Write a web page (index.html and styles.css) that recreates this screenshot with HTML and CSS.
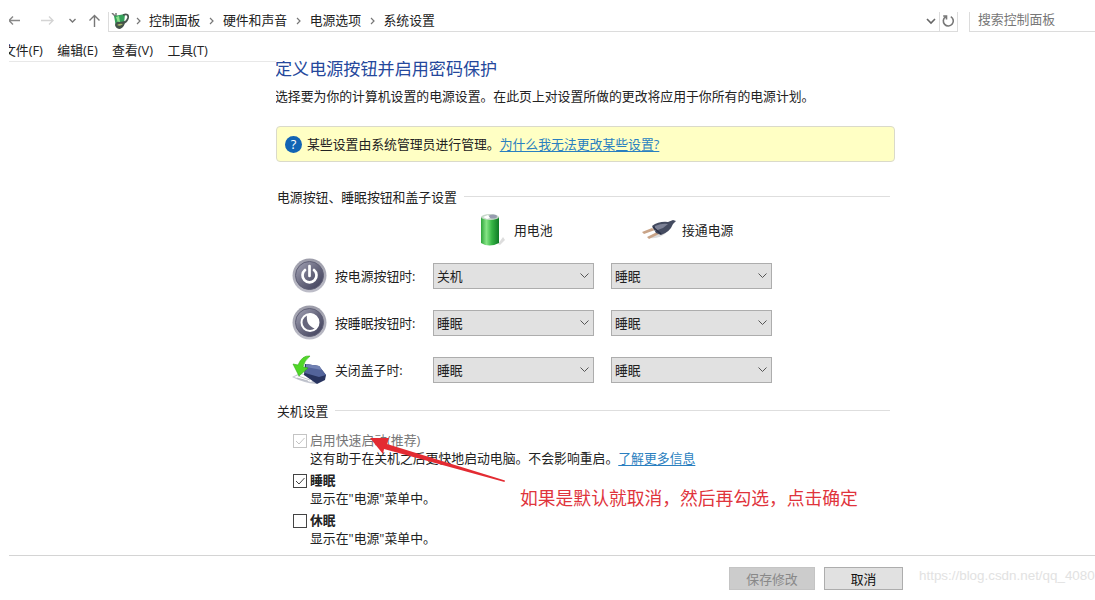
FILE: index.html
```html
<!DOCTYPE html>
<html lang="zh-CN">
<head>
  <meta charset="UTF-8" />
  <meta name="viewport" content="width=device-width, initial-scale=1.0" />
  <title>系统设置</title>
  <link rel="stylesheet" href="styles.css">
</head>
<body>
  <div class="window">
    <header class="address-bar">
      <nav class="nav-icons">
        <svg width="92" height="19" viewBox="0 0 92 19" fill="none" stroke-width="1.4">
          <path d="M0 8.500H11M4 4.500L0 8.500l4 4" stroke="#888" />
          <path d="M32 8.500h12M40 4.500l4 4-4 4" stroke="#d4d4d4" />
          <path d="M60.500 7l3 3 3-3" stroke="#777" />
          <path d="M85.500 15V3.500M80.500 8.500l5-5 5 5" stroke="#777" />
        </svg>
      </nav>
      <div class="path">
        <svg class="path-icon" width="18" height="17" viewBox="0 0 18 17">
          <path d="M1 0l4 4M5 0v4" stroke="#777" stroke-width="1.500" />
          <path d="M3 3l11-2-1 10q-3 4-8 3z" fill="#35a15a" />
          <path d="M5 4l3-1 1 6-2 1z" fill="#8be08b" />
          <path d="M12 2q6-2 5 3-1 4-5 5" fill="none" stroke="#4a5550" stroke-width="1.800" />
          <path d="M4 12q1-4 5-3l5-1q0 6-5 8-4 0-5-4z" fill="#44534a" />
          <path d="M6 12q3-2 6-1-3 3-6 1z" fill="#a9b86b" />
        </svg>
        <svg class="sep" viewBox="0 0 5 8"><path d="M1 1l3 3-3 3" /></svg>
        <span>控制面板</span>
        <svg class="sep" viewBox="0 0 5 8"><path d="M1 1l3 3-3 3" /></svg>
        <span>硬件和声音</span>
        <svg class="sep" viewBox="0 0 5 8"><path d="M1 1l3 3-3 3" /></svg>
        <span>电源选项</span>
        <svg class="sep" viewBox="0 0 5 8"><path d="M1 1l3 3-3 3" /></svg>
        <span>系统设置</span>
        <svg class="history" width="10" height="7" viewBox="0 0 10 7"><path d="M1 1l4 4 4-4" fill="none" stroke="#666" stroke-width="1.600" /></svg>
        <div class="refresh">
          <svg width="13" height="14" viewBox="0 0 13 14"><path d="M8.800 2.600A5 5 0 1 1 3.500 2.800M1.200 2h3.300v3.500" fill="none" stroke="#777" stroke-width="1.600" /></svg>
        </div>
      </div>
      <div class="search">搜索控制面板</div>
    </header>

    <nav class="menu">
      <span>文件(F)</span>
      <span>编辑(E)</span>
      <span>查看(V)</span>
      <span>工具(T)</span>
    </nav>

    <main class="content">
      <h1>定义电源按钮并启用密码保护</h1>
      <p class="intro">选择要为你的计算机设置的电源设置。在此页上对设置所做的更改将应用于你所有的电源计划。</p>

      <div class="notice">
        <span class="help">?</span>
        <span>某些设置由系统管理员进行管理。</span>
        <a href="#">为什么我无法更改某些设置?</a>
      </div>

      <h2 class="buttons-title">电源按钮、睡眠按钮和盖子设置</h2>

      <div class="column-heads">
        <div class="head battery">
          <svg width="26" height="34" viewBox="0 0 26 34">
            <defs>
              <linearGradient id="green">
                <stop offset="0" stop-color="#2fa53c" />
                <stop offset=".3" stop-color="#86e486" />
                <stop offset=".6" stop-color="#37b645" />
                <stop offset="1" stop-color="#0f7a26" />
              </linearGradient>
            </defs>
            <path d="M18 31l5-7 2 3-5 5z" fill="#ddd" />
            <path d="M1 4v26q8 5 18 0V4z" fill="url(#green)" />
            <ellipse cx="10" cy="4" rx="9" ry="3" fill="#c6d7c9" />
            <ellipse cx="13" cy="3.500" rx="4" ry="2" fill="#969baf" />
            <path d="M3 4l5-2 2 3-3 1z" fill="#fff" />
          </svg>
          <span>用电池</span>
        </div>
        <div class="head plug">
          <svg width="36" height="22" viewBox="0 0 36 22">
            <path d="M9 19q10 1 16-5l-9 1z" fill="#ddd" />
            <path d="M1 13l10-4 3 2-11 4zM6 18l10-5 2 2-10 5z" fill="#c9a488" />
            <path d="M11 7q7-5 16-4l5-2 3 1-3 3q-3 8-12 11l-5-2z" fill="#444b60" />
            <path d="M14 7q7-3 13-2l-5 4-8 3z" fill="#7c8195" />
            <path d="M12 8l8 7" stroke="#292f45" stroke-width="1.500" />
          </svg>
          <span>接通电源</span>
        </div>
      </div>

      <div class="setting">
        <svg class="round-icon" width="35" height="35" viewBox="0 0 35 35">
          <defs>
            <linearGradient id="orb" x1="0" y1="0" x2="1" y2="1">
              <stop offset="0" stop-color="#a5a5b7" />
              <stop offset=".5" stop-color="#69697f" />
              <stop offset="1" stop-color="#3d3d59" />
            </linearGradient>
            <linearGradient id="ring" x1="0" y1="0" x2="0" y2="1">
              <stop offset="0" stop-color="#9c9ca9" />
              <stop offset="1" stop-color="#bebec9" />
            </linearGradient>
          </defs>
          <circle cx="17.500" cy="17.500" r="17" fill="url(#ring)" />
          <circle cx="17.500" cy="17.500" r="14" fill="url(#orb)" stroke="#5f5f75" />
          <path d="M13 12a7 7 0 1 0 9 0M17.500 8v10" fill="none" stroke="#fff" stroke-width="2.700" stroke-linecap="round" />
        </svg>
        <span class="name">按电源按钮时:</span>
        <div class="select"><span>关机</span><svg viewBox="0 0 9 6"><path d="M.5.5l4 4 4-4" /></svg></div>
        <div class="select"><span>睡眠</span><svg viewBox="0 0 9 6"><path d="M.5.5l4 4 4-4" /></svg></div>
      </div>
      <div class="setting">
        <svg class="round-icon" width="35" height="35" viewBox="0 0 35 35">
          <circle cx="17.500" cy="17.500" r="17" fill="url(#ring)" />
          <circle cx="17.500" cy="17.500" r="14" fill="url(#orb)" stroke="#5f5f75" />
          <circle cx="18" cy="17.500" r="8.500" fill="#66667c" stroke="#fff" stroke-width="2" />
          <path d="M15 9.500c-1 8 2 12 8 14 6-5 3-15-5-15z" fill="#fff" />
        </svg>
        <span class="name">按睡眠按钮时:</span>
        <div class="select"><span>睡眠</span><svg viewBox="0 0 9 6"><path d="M.5.5l4 4 4-4" /></svg></div>
        <div class="select"><span>睡眠</span><svg viewBox="0 0 9 6"><path d="M.5.5l4 4 4-4" /></svg></div>
      </div>
      <div class="setting">
        <svg class="round-icon" width="35" height="35" viewBox="0 0 35 35">
          <path d="M0 25l8-4 22 6-6 5q-12-1-24-7z" fill="#c3c6d0" />
          <path d="M2 25l7-3 14 5-4 3z" fill="#fff" />
          <path d="M6 24l12 4M5 26l11 3" stroke="#a9adb8" stroke-width=".7" />
          <path d="M13 12l14 2 7 9-1 5-8 4-13-9z" fill="#28345f" />
          <path d="M14 12l13 2 7 9-7 2-14-4z" fill="#53649b" />
          <path d="M14 12l13 2 3 4-16-3z" fill="#7181b3" />
          <path d="M18 4q-8-1-12 9l-5-1 6 12 9-8-5-1q1-6 7-11z" fill="#50d727" stroke="#30ad16" stroke-width=".6" />
        </svg>
        <span class="name">关闭盖子时:</span>
        <div class="select"><span>睡眠</span><svg viewBox="0 0 9 6"><path d="M.5.5l4 4 4-4" /></svg></div>
        <div class="select"><span>睡眠</span><svg viewBox="0 0 9 6"><path d="M.5.5l4 4 4-4" /></svg></div>
      </div>

      <h2 class="shutdown-title">关机设置</h2>

      <div class="option disabled">
        <svg class="box" viewBox="0 0 14 14"><rect x=".5" y=".5" width="13" height="13" /><path d="M3 7l3 3 5.500-6" /></svg>
        <div>
          <div class="option-name">启用快速启动(推荐)</div>
          <div>这有助于在关机之后更快地启动电脑。不会影响重启。<a href="#">了解更多信息</a></div>
        </div>
      </div>
      <div class="option">
        <svg class="box" viewBox="0 0 14 14"><rect x=".5" y=".5" width="13" height="13" /><path d="M3 7l3 3 5.500-6" /></svg>
        <div>
          <div class="option-name">睡眠</div>
          <div>显示在"电源"菜单中。</div>
        </div>
      </div>
      <div class="option">
        <svg class="box" viewBox="0 0 14 14"><rect x=".5" y=".5" width="13" height="13" /></svg>
        <div>
          <div class="option-name">休眠</div>
          <div>显示在"电源"菜单中。</div>
        </div>
      </div>
    </main>

    <footer class="actions">
      <button class="save" disabled>保存修改</button>
      <button class="cancel">取消</button>
      <span class="watermark">https://blog.csdn.net/qq_4080</span>
    </footer>
  </div>

  <svg class="arrow" width="140" height="50" viewBox="0 0 140 50">
    <path d="M0 2l19 0-2 6 118 36.500-.5 1.500L14 13l-1 5z" fill="#e32b32" />
  </svg>
  <div class="remark">如果是默认就取消，然后再勾选，点击确定</div>
</body>
</html>
```

FILE: styles.css
```css
* { box-sizing: border-box; }
body {
  margin: 0;
  width: 1095px;
  height: 600px;
  position: relative;
  overflow: hidden;
  background: #fff;
  color: #222;
  font-family: "Open Sans", "Noto Sans CJK SC", sans-serif;
  font-size: 12.85px;
  line-height: 18px;
}
h1, h2, p { margin: 0; font-weight: normal; }
a { color: #2a7fc0; text-underline-offset: 2px; }
svg { display: block; flex: none; }
.window {
  margin-left: 9px;
  height: 600px;
  padding-top: 12px;
  overflow: hidden;
  display: flex;
  flex-direction: column;
}

/* address bar */
.address-bar { display: flex; height: 20px; }
.nav-icons { width: 99px; }
.path {
  display: flex;
  align-items: center;
  width: 850px;
  padding-left: 2px;
  border: 1px solid #dcdcdc;
  border-top: 0;
  line-height: 16px;
}
.path span { white-space: nowrap; padding-bottom: 4px; }
.path-icon { margin-right: 7px; }
.sep { width: 5px; height: 8px; margin: 0 9px 2px 8.500px; }
.sep:nth-of-type(2) { margin-left: 0; margin-right: 8px; }
.sep path { fill: none; stroke: #777; stroke-width: 1.2; }
.history { margin-left: auto; margin-right: 3px; }
.refresh {
  align-self: stretch;
  width: 18px;
  padding: 2px;
  border-left: 1px solid #dcdcdc;
}
.search {
  flex: 1;
  margin-left: 11px;
  padding-left: 8px;
  border: 1px solid #dcdcdc;
  border-width: 0 0 1px 1px;
  color: #777;
  line-height: 15px;
}

.menu {
  display: flex;
  gap: 14.4px;
  width: 267px;
  height: 30px;
  padding-top: 9px;
  border-bottom: 1px solid #e8e8e8;
  white-space: nowrap;
}
.menu span:first-child { margin-left: -6px; }

/* page */
.content {
  height: 494px;
  margin-top: -1px;
  margin-left: 267px;
  width: 619px;
  overflow: hidden;
}
h1 {
  height: 18px;
  margin-top: -1px;
  margin-left: -1px;
  font-size: 17.1px;
  color: #25489c;
}
.intro { margin: 9px 0 0 -1px; height: 18px; white-space: nowrap; }
.notice {
  display: flex;
  align-items: center;
  height: 36px;
  margin-top: 21px;
  padding-left: 8px;
  background: #ffffc4;
  border: 1px solid #dadaca;
  border-radius: 4px;
}
.help {
  width: 17px;
  height: 17px;
  margin-right: 5px;
  border-radius: 50%;
  background: #1264b4;
  color: #fff;
  font-size: 13px;
  line-height: 17px;
  text-align: center;
}
h2 {
  display: flex;
  align-items: center;
  width: 614px;
  height: 18px;
  padding-left: 1px;
  font-size: inherit;
}
h2::after {
  content: "";
  flex: 1;
  height: 1px;
  margin-left: 7px;
  margin-bottom: 2px;
  background: #dedede;
}
.buttons-title { margin-top: 26px; }
.column-heads { display: flex; height: 34px; margin-top: 7px; }
.head { display: flex; align-items: center; }
.battery { width: 161px; margin-left: 204px; gap: 8px; }
.plug { gap: 5px; }

.setting {
  display: flex;
  align-items: center;
  height: 35px;
  margin: 12px 0 0 16px;
}
.column-heads + .setting { margin-top: 11px; }
.name { width: 98px; margin-left: 8px; }
.select {
  display: flex;
  align-items: center;
  justify-content: space-between;
  width: 161px;
  height: 26px;
  margin-right: 17px;
  padding: 0 4px 0 3px;
  background: #e1e1e1;
  border: 1px solid #adadad;
}
.select svg { width: 9px; height: 6px; }
.select path { fill: none; stroke: #555; }

.shutdown-title { margin-top: 15px; }
.option {
  display: flex;
  margin: 4px 0 0 17px;
  line-height: 18px;
  white-space: nowrap;
}
.shutdown-title + .option { margin-top: 11px; }
.box { width: 14px; height: 14px; margin: 3px 3px 0 0; }
.box rect, .box path { fill: none; stroke: #444; }
.option:not(.disabled) .option-name { font-weight: 700; }
.disabled .option-name { color: #777; }
.disabled .box rect, .disabled .box path { stroke: #c4c4c4; }

.actions {
  display: flex;
  height: 45px;
  padding: 11px 0 0 720px;
  border-top: 1px solid #d4d4d4;
}
button {
  height: 23px;
  padding: 0;
  border: 1px solid #adadad;
  background: #e1e1e1;
  color: #111;
  font: inherit;
}
.save { width: 86px; margin-right: 9px; }
.save:disabled { background: #ccc; border-color: #c4c4c4; color: #888; }
.cancel { width: 79px; }
.watermark {
  margin-left: 16px;
  font: 13.4px/18px "Liberation Sans", sans-serif;
  color: #e2e2e2;
  white-space: nowrap;
}

/* annotation over the page */
.arrow { position: absolute; left: 370px; top: 436px; }
.remark {
  position: absolute;
  left: 520px;
  top: 486px;
  font-size: 17.8px;
  line-height: 24px;
  color: #e0343c;
  white-space: nowrap;
}
```
